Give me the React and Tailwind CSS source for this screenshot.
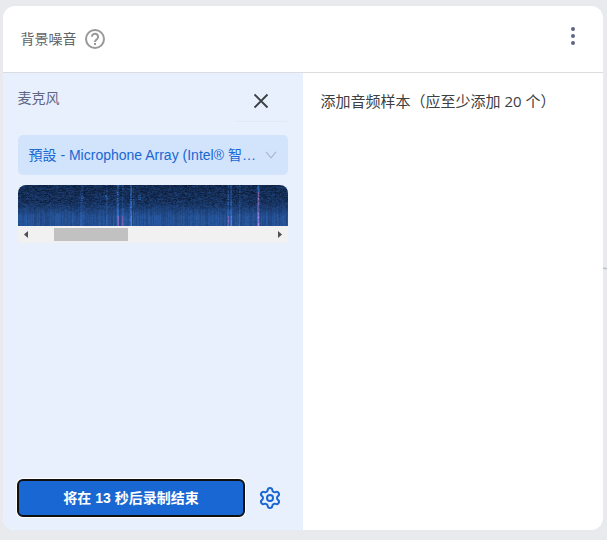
import { useLayoutEffect, useRef } from "react";
import { Settings } from "lucide-react";

// x position, strength, pink tint
const peaks = [
  [62, 0.12, 0], [63, 0.16, 0], [64, 0.2, 0], [88, 0.22, 0], [89, 0.15, 0],
  [98, 0.2, 0], [99, 0.55, 0], [100, 0.4, 1], [104, 0.25, 1], [105, 0.15, 0],
  [112, 0.55, 0], [113, 0.55, 1], [115, 0.2, 0], [209, 0.25, 0], [210, 0.4, 1],
  [212, 0.3, 0], [213, 0.45, 1], [221, 0.25, 0], [222, 0.15, 0],
  [239, 0.5, 0], [240, 0.7, 2], [241, 0.35, 0],
];

// x, y, radius, strength of short bursts
const bursts = [
  [64, 13, 3, 0.25], [69, 14, 2, 0.15], [88, 12, 3, 0.3], [115, 16, 3, 0.15], [121, 12, 3, 0.3],
];

function Spectrogram() {
  const ref = useRef(null);
  useLayoutEffect(() => {
    const w = 270;
    const h = 41;
    const ctx = ref.current.getContext("2d");
    const img = ctx.createImageData(w, h);
    let seed = 917;
    const rand = () => {
      seed = (seed * 1664525 + 1013904223) >>> 0;
      return seed / 4294967296;
    };
    const columns = Array.from({ length: w }, () => rand());
    let row = [];
    for (let y = 0; y < h; y++) {
      const previous = row;
      row = Array.from({ length: w }, () => rand());
      for (let x = 1; x < w; x++) row[x] = row[x] * 0.65 + row[x - 1] * 0.35;
      for (let x = 0; x < w; x++) {
        const low = Math.min(1, Math.max(0, (y - 17) / 14));
        const noise = previous.length ? row[x] * (1 - low * 0.6) + previous[x] * low * 0.6 : row[x];
        let v = (0.06 + noise * 0.36) * (1 - low) + low * (0.36 + columns[x] * 0.14 + noise * 0.14);
        v += Math.min(y, 18) * 0.003;
        let pink = 0;
        for (const [px, strength, tint] of peaks) {
          if (px === x) {
            v += strength * (0.3 + noise * 0.4);
            if (tint === 1 && y > 30) pink = 0.5 + noise * 0.4;
            if (tint === 2 && y > 6) pink = noise * 1.3;
          }
        }
        for (const [bx, by, radius, strength] of bursts) {
          if (Math.abs(bx - x) < 2 && Math.abs(by - y) < radius) v += strength * (0.3 + noise * 0.5);
        }
        v = Math.min(v, 1);
        const i = (y * w + x) * 4;
        img.data[i] = 6 + v * 54 + pink * 100;
        img.data[i + 1] = 14 + v * 118;
        img.data[i + 2] = 32 + v * 205;
        img.data[i + 3] = 255;
      }
    }
    ctx.putImageData(img, 0, 0);
  }, []);
  return <canvas ref={ref} width={270} height={41} className="block h-[41px] w-[270px] rounded-t-lg" />;
}

function Header() {
  return (
    <header className="flex h-[67px] shrink-0 items-start justify-between border-b border-[#dadce0] pl-[17.5px] pr-[24px]">
      <div className="flex h-[66px] items-center gap-[7.5px]">
        <h1 className="text-[14px] leading-5 text-[#5f6368]">背景噪音</h1>
        <svg className="size-[22px]" viewBox="0 0 22 22" fill="none" stroke="#999" strokeWidth="2">
          <circle cx="11" cy="11" r="9" />
          <path d="M7.9 8.8a3.1 3.1 0 1 1 5.1 2.4c-1.2 1-2 1.4-2 2.9" />
          <path d="M11 15.1v2" />
        </svg>
      </div>
      <button className="mt-[21px] flex h-[18px] w-3 flex-col items-center justify-between" aria-label="更多">
        <span className="size-1 rounded-full bg-[#5f6684]" />
        <span className="size-1 rounded-full bg-[#5f6684]" />
        <span className="size-1 rounded-full bg-[#5f6684]" />
      </button>
    </header>
  );
}

function Recorder() {
  return (
    <section className="flex w-[300px] shrink-0 flex-col bg-[#e8f0fe] px-[15px]">
      <div className="flex h-[62px] items-start justify-between">
        <h2 className="-ml-[0.5px] mt-[15px] text-[14px] leading-5 text-[#5f6684]">麦克风</h2>
        <button className="flex h-[49px] w-[54px] items-center justify-center rounded border-b border-[#e1e8f6] pt-2" aria-label="关闭">
          <svg className="size-4" viewBox="0 0 16 16" stroke="#3c4043" strokeWidth="1.9">
            <path d="M1.5 1.5l13 13M14.5 1.5l-13 13" />
          </svg>
        </button>
      </div>
      <button className="flex h-10 shrink-0 items-center justify-between rounded-[5px] bg-[#d2e3fc] pl-[10.5px] pr-[11px]">
        <span className="whitespace-nowrap text-left text-[14px] leading-5 text-[#1967d2]">預設 - Microphone Array (Intel® 智…</span>
        <svg className="h-2 w-3" viewBox="0 0 12 8" fill="none" stroke="#a9b7cf" strokeWidth="1.2">
          <path d="M1 .8l5 6 5-6" />
        </svg>
      </button>
      <div className="mt-[10px]">
        <Spectrogram />
        <div className="flex h-[17px] items-center justify-between bg-[#f1f1f1] px-[6px]">
          <svg className="h-[7px] w-1" viewBox="0 0 4 7" fill="#505050"><path d="M4 0v7L0 3.5z" /></svg>
          <div className="mr-auto ml-[26px] h-[13px] w-[74px] bg-[#c1c1c1]" />
          <svg className="h-[7px] w-1" viewBox="0 0 4 7" fill="#505050"><path d="M0 0v7l4-3.5z" /></svg>
        </div>
      </div>
      <div className="mt-auto mb-[13px] flex items-center">
        <button className="-ml-px h-[38px] w-[228px] rounded-[6px] border-2 border-[#101010] bg-[#1967d2] text-[14px] font-bold leading-5 text-white ring-1 ring-white">将在 13 秒后录制结束</button>
        <Settings className="ml-[13px] size-6 text-[#1967d2]" strokeWidth={2} />
      </div>
    </section>
  );
}

export default function App() {
  return (
    <div className="relative h-[540px] w-[607px] overflow-hidden bg-[#e8eaed] px-[3px] pt-[6px] [font-family:'Liberation_Sans','Noto_Sans_CJK_SC',sans-serif]">
      <main className="flex h-[524px] w-[600px] flex-col overflow-hidden rounded-xl bg-white">
        <Header />
        <div className="flex min-h-0 flex-1">
          <Recorder />
          <section className="flex-1 pl-[17.5px] pt-[17px]">
            <p className="whitespace-nowrap text-[15px] leading-[22px] text-[#3c4043] [font-family:'Open_Sans','Noto_Sans_CJK_SC',sans-serif]">添加音频样本（应至少添加 20 个）</p>
          </section>
        </div>
      </main>
      <svg className="absolute top-[266px] left-[603px] h-1 w-1" viewBox="0 0 4 4" stroke="#bdc1c6" strokeWidth="1.5">
        <path d="M0 2l4 .8" />
      </svg>
    </div>
  );
}
